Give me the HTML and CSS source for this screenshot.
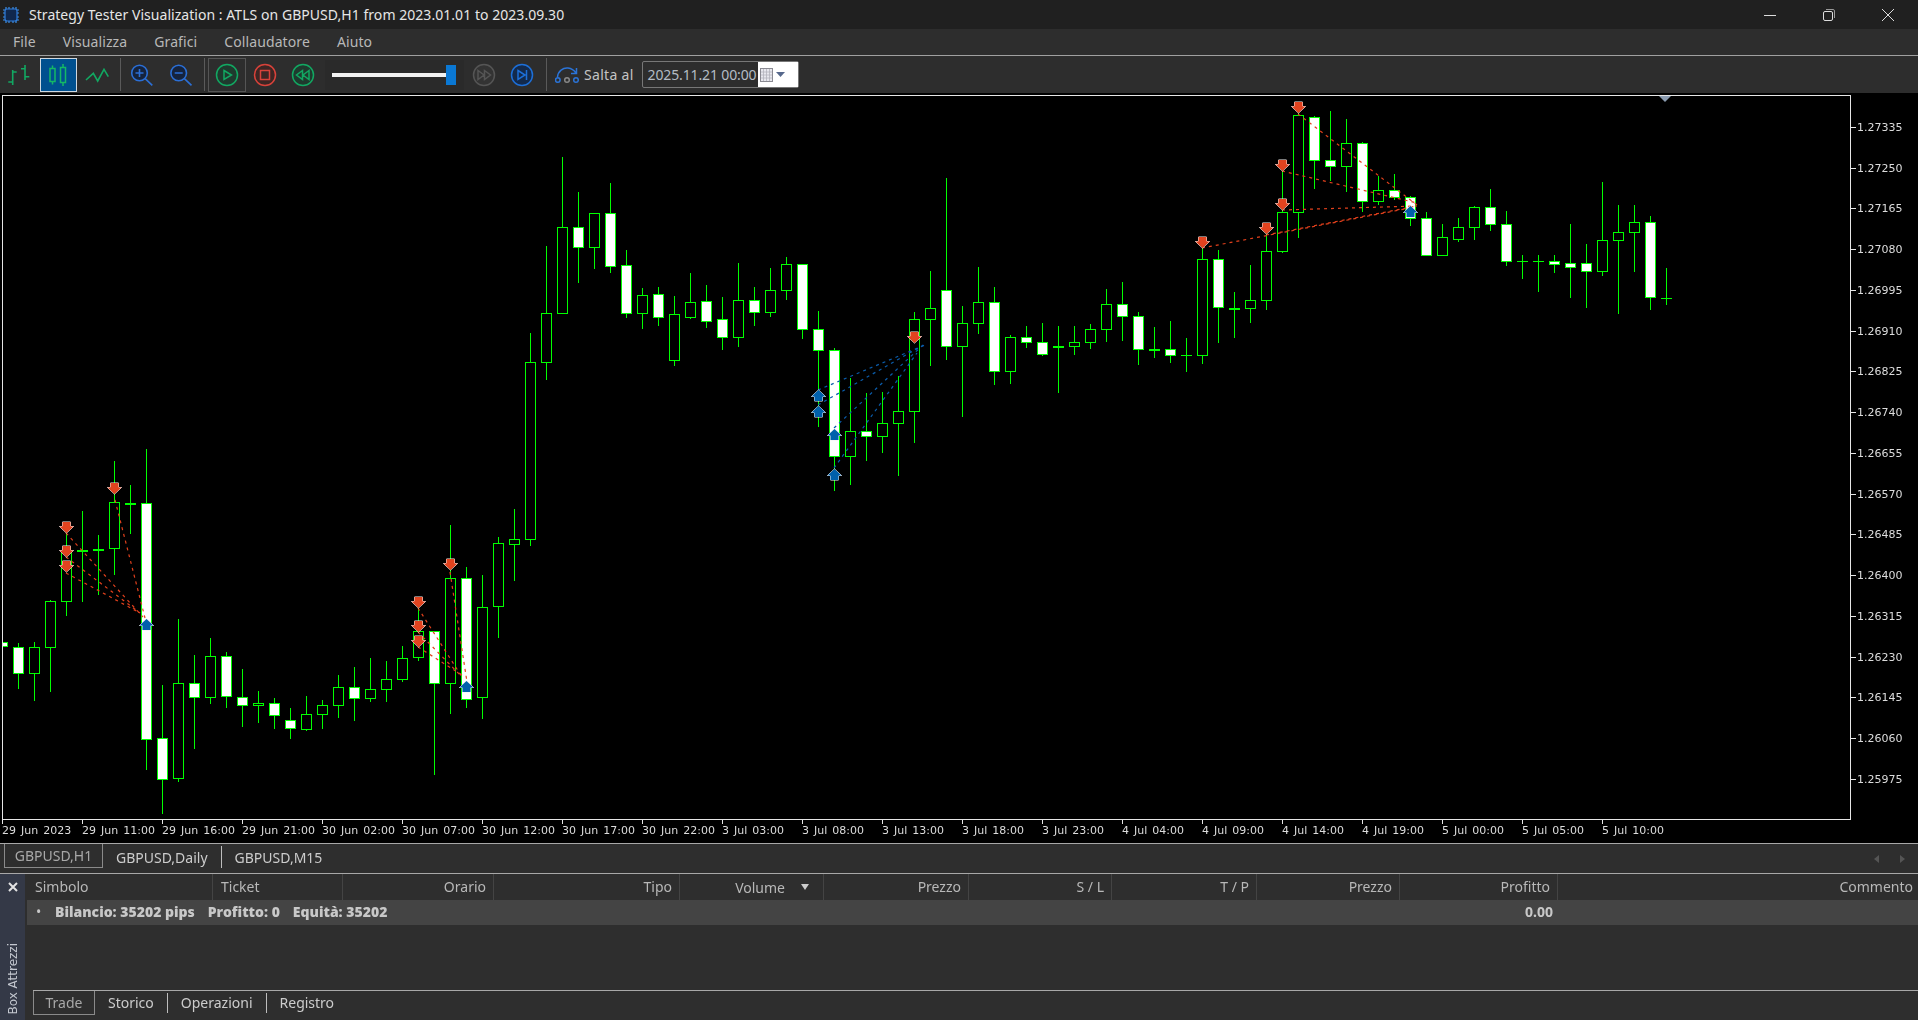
FILE: index.html
```html
<!DOCTYPE html>
<html lang="it">

<head>
  <meta charset="UTF-8" />
  <title>Strategy Tester Visualization</title>
  <link rel="stylesheet" href="styles.css">
</head>

<body>
  <div class="titlebar">
    <svg class="app-icon" width="18" height="18" viewBox="0 0 18 18">
      <path d="M4 1v16M7 1v16M11 1v16M14 1v16M1 4h16M1 7h16M1 11h16M1 14h16" stroke="#3d8fe8" stroke-width="1.2" />
      <rect x="3" y="3" width="12" height="12" rx="2" fill="#10284e" stroke="#2f7fe0" stroke-width="1.2" />
    </svg>
    <span class="title-text">Strategy Tester Visualization : ATLS on GBPUSD,H1 from 2023.01.01 to 2023.09.30</span>
    <div class="win-buttons">
      <svg width="14" height="14" viewBox="0 0 14 14"><path d="M1 7.5h12" stroke="#ddd" fill="none" /></svg>
      <svg width="14" height="14" viewBox="0 0 14 14"><rect x="1.5" y="3.5" width="9" height="9" rx="1.5" stroke="#ddd" fill="none" /><path d="M4 1.5h7a1.5 1.5 0 0 1 1.5 1.5v7" stroke="#999" fill="none" /></svg>
      <svg width="14" height="14" viewBox="0 0 14 14"><path d="M1 1l12 12M13 1L1 13" stroke="#ddd" fill="none" /></svg>
    </div>
  </div>

  <div class="menubar">
    <span>File</span>
    <span>Visualizza</span>
    <span>Grafici</span>
    <span>Collaudatore</span>
    <span>Aiuto</span>
  </div>

  <div class="toolbar">
    <div class="tool">
      <svg width="38" height="34" viewBox="0 0 38 34" fill="none" stroke="#12a862" stroke-width="1.6">
        <path d="M10.7 12v15M6.3 24h4.4M10.7 14h4M23 7v15M19 10.7h4M23 18.7h4.3" />
      </svg>
    </div>
    <div class="tool selected">
      <svg width="38" height="34" viewBox="0 0 38 34" fill="none" stroke="#14b866" stroke-width="1.5">
        <path d="M12.5 7.5v19M23 6v22" />
        <rect x="10" y="10.5" width="5" height="13" fill="#00508f" />
        <rect x="20.5" y="9.5" width="5" height="15" fill="#00508f" />
      </svg>
    </div>
    <div class="tool">
      <svg width="38" height="34" viewBox="0 0 38 34" fill="none" stroke="#12a862" stroke-width="1.6">
        <path d="M8 22l7.3-6.7L19.7 23 26 11.3l4.3 7.4" />
      </svg>
    </div>
    <div class="sep sep-first"></div>
    <div class="tool">
      <svg width="38" height="34" viewBox="0 0 38 34" fill="none" stroke="#2b6fd6" stroke-width="1.6">
        <circle cx="16.5" cy="15" r="7.8" fill="#15233d" />
        <path d="M22.2 20.7l7.1 6.6M12.5 15h8M16.5 11v8" />
      </svg>
    </div>
    <div class="tool">
      <svg width="38" height="34" viewBox="0 0 38 34" fill="none" stroke="#2b6fd6" stroke-width="1.6">
        <circle cx="17.7" cy="15" r="7.8" fill="#15233d" />
        <path d="M23.4 20.7l7.1 6.6M13.7 15h8" />
      </svg>
    </div>
    <div class="sep sep-play"></div>
    <div class="tool boxed">
      <svg width="38" height="34" viewBox="0 0 38 34" fill="none" stroke="#12a862" stroke-width="1.5">
        <circle cx="19" cy="17" r="10.5" fill="#1f3a2e" />
        <path d="M16 12.5l7.5 4.5-7.5 4.5z" />
      </svg>
    </div>
    <div class="tool">
      <svg width="38" height="34" viewBox="0 0 38 34" fill="none" stroke="#d8423a" stroke-width="1.5">
        <circle cx="19" cy="17" r="10.5" fill="#3d2624" />
        <rect x="14.5" y="12.5" width="9" height="9" />
      </svg>
    </div>
    <div class="tool">
      <svg width="38" height="34" viewBox="0 0 38 34" fill="none" stroke="#12a862" stroke-width="1.5">
        <circle cx="19" cy="17" r="10.5" fill="#1f3a2e" />
        <path d="M18.5 12.5l-6 4.5 6 4.5zM25 12.5l-6 4.5 6 4.5z" />
      </svg>
    </div>
    <div class="slider">
      <div class="slider-track"></div>
      <div class="slider-handle"></div>
    </div>
    <div class="tool">
      <svg width="38" height="34" viewBox="0 0 38 34" fill="none" stroke="#555" stroke-width="1.5">
        <circle cx="19" cy="17" r="10.5" fill="#333" />
        <path d="M13 12.5l6 4.5-6 4.5zM19.5 12.5l6 4.5-6 4.5z" />
      </svg>
    </div>
    <div class="tool">
      <svg width="38" height="34" viewBox="0 0 38 34" fill="none" stroke="#1d6fd8" stroke-width="1.5">
        <circle cx="19" cy="17" r="10.5" fill="#132a4c" />
        <path d="M15 12.5l7 4.5-7 4.5zM23.5 12v10" />
      </svg>
    </div>
    <div class="sep sep-jump"></div>
    <svg class="jump-icon" width="24" height="18" viewBox="0 0 24 18" fill="none" stroke="#2b74d8" stroke-width="1.5">
      <path d="M2.5 11C3 5 8 1.5 13 2c3.5 .4 6 2 8 5M21.5 2v5.5H16" />
      <circle cx="2.8" cy="14" r="2.3" />
      <circle cx="12" cy="14" r="2.3" stroke="#888" />
      <circle cx="21" cy="14" r="2.3" />
    </svg>
    <span class="jump-label">Salta al</span>
    <div class="date-input">
      <span class="date-value">2025.11.21 00:00</span>
      <div class="date-button">
        <svg width="30" height="18" viewBox="0 0 30 18">
          <rect x="2.5" y="2.5" width="12" height="13" fill="#e8e8ee" stroke="#8a8a92" />
          <path d="M5.5 3v12M8.5 3v12M11.5 3v12M3 6h11M3 9h11M3 12h11" stroke="#b4b4bc" stroke-width=".8" />
          <path d="M18 6h9l-4.5 5z" fill="#56688c" />
        </svg>
      </div>
    </div>
  </div>

  <div class="chart">
    <div class="chart-main">
      <div class="plot">
        <canvas id="candles" width="1847" height="723"></canvas>
      </div>
      <div class="price-axis">
        <span>1.27335</span><span>1.27250</span><span>1.27165</span><span>1.27080</span>
        <span>1.26995</span><span>1.26910</span><span>1.26825</span><span>1.26740</span>
        <span>1.26655</span><span>1.26570</span><span>1.26485</span><span>1.26400</span>
        <span>1.26315</span><span>1.26230</span><span>1.26145</span><span>1.26060</span>
        <span>1.25975</span>
      </div>
    </div>
    <div class="time-axis">
      <span>29 Jun 2023</span><span>29 Jun 11:00</span><span>29 Jun 16:00</span><span>29 Jun 21:00</span>
      <span>30 Jun 02:00</span><span>30 Jun 07:00</span><span>30 Jun 12:00</span><span>30 Jun 17:00</span>
      <span>30 Jun 22:00</span><span>3 Jul 03:00</span><span>3 Jul 08:00</span><span>3 Jul 13:00</span>
      <span>3 Jul 18:00</span><span>3 Jul 23:00</span><span>4 Jul 04:00</span><span>4 Jul 09:00</span>
      <span>4 Jul 14:00</span><span>4 Jul 19:00</span><span>5 Jul 00:00</span><span>5 Jul 05:00</span>
      <span>5 Jul 10:00</span>
    </div>
  </div>

  <div class="chart-tabs">
    <span class="tab active">GBPUSD,H1</span>
    <span class="tab divided">GBPUSD,Daily</span>
    <span class="tab">GBPUSD,M15</span>
    <div class="tab-arrows">
      <svg width="8" height="10" viewBox="0 0 8 10"><path d="M6 1v8L1 5z" fill="#555" /></svg>
      <svg width="8" height="10" viewBox="0 0 8 10"><path d="M2 1v8l5-4z" fill="#555" /></svg>
    </div>
  </div>

  <div class="toolbox">
    <div class="toolbox-side">
      <svg width="12" height="12" viewBox="0 0 12 12"><path d="M2 2l8 8M10 2l-8 8" stroke="#e4e4e4" stroke-width="2" /></svg>
      <span class="toolbox-name">Box Attrezzi</span>
    </div>
    <div class="toolbox-main">
      <div class="cols head">
        <div>Simbolo</div>
        <div>Ticket</div>
        <div class="right">Orario</div>
        <div class="right">Tipo</div>
        <div class="volume">Volume <svg width="8" height="6" viewBox="0 0 8 6"><path d="M0 0h8L4 6z" fill="#ccc" /></svg></div>
        <div class="right">Prezzo</div>
        <div class="right">S / L</div>
        <div class="right">T / P</div>
        <div class="right">Prezzo</div>
        <div class="right">Profitto</div>
        <div class="right last">Commento</div>
      </div>
      <div class="cols balance">
        <div class="balance-text"><span class="dot">•</span><b>Bilancio: 35202 pips</b><b>Profitto: 0</b><b>Equità: 35202</b></div>
        <div class="balance-profit">0.00</div>
      </div>
      <div class="bottom-tabs">
        <span class="btab active">Trade</span>
        <span class="btab divided">Storico</span>
        <span class="btab divided">Operazioni</span>
        <span class="btab">Registro</span>
      </div>
    </div>
  </div>

  <script src="chart.js"></script>
</body>

</html>
```

FILE: styles.css
```css
* {
  box-sizing: border-box;
}

html,
body {
  margin: 0;
  height: 1020px;
  overflow: hidden;
}

body {
  display: flex;
  flex-direction: column;
  background: #2e2e2e;
  font-family: "Noto Sans", sans-serif;
  font-size: 14px;
  color: #b8b8b8;
}

.titlebar {
  height: 29px;
  flex: none;
  display: flex;
  align-items: center;
  padding-left: 2px;
  background: #202020;
  color: #e6e6e6;
}

.app-icon {
  margin-right: 9px;
}

.title-text {
  font-size: 14px;
  letter-spacing: 0.045px;
}

.win-buttons {
  margin-left: auto;
  margin-right: 23px;
  display: flex;
  gap: 45px;
}

.menubar {
  height: 26px;
  flex: none;
  display: flex;
  align-items: center;
  padding: 0 0 2px 13px;
  gap: 27px;
  letter-spacing: 0.1px;
  background: #2d2d2d;
}

.toolbar {
  height: 38px;
  flex: none;
  display: flex;
  align-items: center;
  padding-left: 2px;
  border-top: 1px solid #a0a0a0;
  background: #2d2d2d;
}

.tool {
  width: 38px;
  height: 34px;
  flex: none;
}

.tool svg {
  display: block;
}

.tool.selected {
  background: #00508f;
  border: 1px solid #cfd8e0;
  width: 37px;
  margin-right: 1px;
}

.tool.selected svg {
  margin: -1px;
}

.tool.boxed {
  border: 1px solid #555;
}

.tool.boxed svg {
  margin: -1px;
}

.sep {
  width: 1px;
  height: 33px;
  background: #5a5a5a;
  flex: none;
}

.sep-first {
  margin: 0 2px 0 4px;
}

.sep-play {
  margin: 0 3px 0 5px;
}

.sep-jump {
  margin: 0 8px 0 5px;
}

.slider {
  width: 139px;
  height: 30px;
  margin: 0 1px 0 3px;
  padding-left: 7px;
  display: flex;
  align-items: center;
  background: #2a2a2a;
  flex: none;
}

.slider-track {
  width: 114px;
  height: 4px;
  background: #f2f2f2;
}

.slider-handle {
  width: 10px;
  height: 20px;
  background: #0a78d4;
}

.jump-icon {
  flex: none;
}

.jump-label {
  margin-left: 5px;
  color: #c4c4c4;
  letter-spacing: 0.3px;
}

.date-input {
  margin-left: 8px;
  width: 157px;
  height: 27px;
  display: flex;
  border: 1px solid #777;
  border-radius: 2px;
  color: #b4bcc4;
}

.date-value {
  width: 115px;
  padding-left: 5px;
  line-height: 25px;
  white-space: nowrap;
  letter-spacing: -0.13px;
}

.date-button {
  flex: 1;
  display: flex;
  align-items: center;
  background: #fff;
}

.chart {
  height: 750px;
  flex: none;
  padding: 2px 0 0 2px;
  background: #000;
  color: #dcdcdc;
  font-family: "DejaVu Sans", sans-serif;
  font-size: 11px;
}

.chart-main {
  display: flex;
  height: 725px;
}

.plot {
  width: 1849px;
  height: 725px;
  flex: none;
  border: 1px solid #e6e6e6;
}

#candles {
  display: block;
}

.price-axis {
  display: flex;
  flex-direction: column;
  padding-top: 12px;
}

.price-axis span {
  height: 40.75px;
  display: flex;
  align-items: center;
  gap: 1px;
}

.price-axis span::before {
  content: "";
  width: 5px;
  height: 1px;
  background: #e6e6e6;
}

.time-axis {
  display: flex;
  word-spacing: 1.5px;
  line-height: 14px;
}

.time-axis span {
  width: 80px;
  flex: none;
  white-space: nowrap;
}

.time-axis span::before {
  content: "";
  display: block;
  width: 1px;
  height: 4px;
  background: #e6e6e6;
}

.chart-tabs {
  height: 30px;
  flex: none;
  display: flex;
  padding-left: 4px;
  border-top: 1px solid #a8a8a8;
  color: #cccccc;
}

.tab {
  height: 22px;
  padding: 0 13px;
  line-height: 24px;
  margin-top: 2px;
}

.tab.active {
  height: 24px;
  width: 99px;
  margin-top: 0;
  padding: 0;
  text-align: center;
  border: 1px solid #8a8a8a;
  border-top: 0;
  color: #a8a8a8;
}

.tab.divided {
  border-right: 1px solid #bdbdbd;
}

.tab-arrows {
  margin-left: auto;
  margin-right: 12px;
  display: flex;
  align-items: center;
  gap: 17px;
}

.toolbox {
  flex: 1;
  display: flex;
  border-top: 1px solid #a8a8a8;
}

.toolbox-side {
  width: 25px;
  flex: none;
  display: flex;
  flex-direction: column;
  justify-content: space-between;
  align-items: center;
  padding: 7px 0 5px;
  background: #343947;
}

.toolbox-name {
  writing-mode: vertical-rl;
  transform: rotate(180deg);
  font-family: "DejaVu Sans", sans-serif;
  font-size: 12px;
  color: #c4c8d0;
}

.toolbox-main {
  flex: 1;
  display: flex;
  flex-direction: column;
  padding-left: 2px;
}

.cols {
  display: grid;
  grid-template-columns: 186px 130px 151px 186px 144px 145px 143px 145px 143px 158px 1fr;
}

.head {
  height: 26px;
  line-height: 25px;
}

.head > div {
  padding: 0 7px 0 8px;
  border-right: 1px solid #444;
}

.head .last {
  border-right: 0;
  padding-right: 5px;
}

.right {
  text-align: right;
}

.head .volume {
  display: flex;
  align-items: center;
  justify-content: flex-end;
  gap: 16px;
  padding-right: 14px;
}

.balance {
  height: 25px;
  line-height: 24px;
  background: #444;
  font-weight: 700;
  color: #c8c8c8;
}

.balance-text {
  grid-column: 1 / 10;
  display: flex;
  gap: 13px;
}

.dot {
  width: 6px;
  margin-left: 9px;
  font-weight: 400;
}

.balance-profit {
  grid-column: 10;
  text-align: right;
  padding-right: 5px;
}

.bottom-tabs {
  margin-top: auto;
  margin-left: 6px;
  height: 30px;
  display: flex;
  border-top: 1px solid #a8a8a8;
  color: #cccccc;
}

.btab {
  height: 20px;
  margin-top: 2px;
  padding: 0 13px;
  line-height: 20px;
}

.btab.active {
  height: 24px;
  width: 62px;
  margin-top: 0;
  padding: 0;
  line-height: 24px;
  text-align: center;
  border: 1px solid #8a8a8a;
  border-top: 0;
  color: #a8a8a8;
}

.btab.divided {
  border-right: 1px solid #bdbdbd;
}
```

FILE: chart.js
```js
const canvas = document.getElementById("candles");
const ctx = canvas.getContext("2d");

const GREEN = "#00ff00";
const FIRST_X = 18;
const STEP = 16;

// high, body top, body bottom, low, white body (page pixels), one row per bar
const bars = [
  [643, 647, 673, 688, 1], [642, 647, 673, 700, 0], [600, 601, 647, 691, 0], [528, 551, 601, 615, 0],
  [511, 550, 551, 601, 2], [535, 549, 550, 594, 2], [461, 502, 548, 574, 0], [485, 503, 504, 533, 2],
  [449, 503, 739, 769, 1], [685, 738, 779, 813, 1], [619, 683, 778, 781, 0], [655, 683, 697, 748, 1],
  [638, 656, 697, 703, 0], [652, 656, 696, 707, 1], [669, 697, 705, 726, 1], [691, 703, 705, 722, 0],
  [698, 703, 715, 728, 1], [708, 720, 728, 738, 1], [696, 714, 729, 730, 0], [700, 705, 714, 728, 0],
  [675, 687, 705, 717, 0], [667, 687, 698, 720, 1], [658, 689, 698, 701, 0], [661, 679, 689, 701, 0],
  [646, 658, 679, 681, 0], [607, 631, 657, 660, 0], [631, 631, 683, 774, 1], [525, 578, 683, 713, 0],
  [567, 578, 699, 707, 1], [575, 607, 697, 718, 0], [537, 543, 606, 637, 0], [509, 539, 544, 580, 0],
  [333, 362, 539, 545, 0], [246, 313, 362, 379, 0], [157, 227, 313, 313, 0], [192, 227, 247, 282, 1],
  [213, 213, 247, 268, 0], [183, 213, 266, 272, 1], [250, 265, 313, 317, 1], [288, 295, 313, 328, 0],
  [287, 294, 317, 325, 1], [296, 314, 360, 365, 0], [273, 302, 317, 318, 0], [285, 301, 321, 327, 1],
  [297, 319, 337, 349, 1], [263, 300, 337, 346, 0], [287, 300, 312, 325, 1], [268, 290, 312, 316, 0],
  [257, 264, 290, 299, 0], [264, 264, 329, 338, 1], [311, 329, 350, 426, 1], [348, 350, 456, 490, 1],
  [378, 431, 456, 484, 0], [393, 431, 436, 460, 1], [392, 423, 436, 452, 0], [376, 411, 423, 475, 0],
  [312, 319, 411, 442, 0], [271, 308, 319, 365, 0], [178, 290, 346, 359, 1], [306, 323, 346, 416, 0],
  [267, 302, 323, 333, 0], [287, 302, 371, 384, 1], [335, 337, 371, 383, 0], [326, 337, 342, 347, 1],
  [323, 342, 354, 355, 1], [326, 346, 347, 392, 2], [326, 342, 346, 354, 0], [324, 329, 342, 348, 0],
  [289, 304, 329, 341, 0], [282, 304, 316, 340, 1], [312, 316, 349, 364, 1], [327, 349, 350, 357, 2],
  [321, 349, 355, 362, 1], [338, 355, 355, 371, 3], [247, 259, 355, 363, 0], [250, 259, 307, 342, 1],
  [292, 308, 309, 337, 2], [265, 300, 308, 322, 0], [233, 251, 300, 309, 0], [170, 212, 251, 252, 0],
  [113, 115, 212, 237, 0], [116, 117, 160, 188, 1], [111, 160, 166, 180, 1], [119, 143, 166, 191, 0],
  [142, 143, 201, 211, 1], [176, 190, 201, 204, 0], [174, 190, 197, 199, 1], [196, 197, 218, 225, 1],
  [212, 218, 255, 255, 1], [224, 237, 255, 255, 0], [218, 227, 239, 241, 0], [206, 207, 227, 239, 0],
  [189, 207, 224, 230, 1], [211, 224, 261, 265, 1], [255, 261, 261, 278, 3], [255, 261, 261, 291, 3],
  [255, 261, 264, 272, 1], [224, 263, 267, 297, 1], [244, 263, 271, 307, 1], [182, 240, 271, 275, 0],
  [205, 232, 240, 313, 0], [205, 222, 232, 271, 0], [216, 222, 297, 309, 1], [268, 298, 298, 304, 3]
];

const redLines = [
  [66, 533, 143, 617], [66, 557, 140, 613], [66, 573, 140, 613], [115, 500, 145, 618],
  [418, 608, 462, 677], [418, 632, 462, 677], [418, 647, 462, 675], [450, 572, 467, 682],
  [1298, 114, 1417, 205], [1282, 171, 1417, 203], [1282, 210, 1417, 206],
  [1266, 235, 1417, 206], [1202, 248, 1410, 208]
];

const blueLines = [
  [818, 390, 925, 345], [818, 405, 920, 347], [834, 428, 923, 345], [834, 468, 917, 353]
];

const sells = [
  [66, 527], [66, 551], [66, 566], [114, 488], [450, 564], [418, 602], [418, 626], [418, 641],
  [914, 337], [1298, 107], [1282, 165], [1282, 204], [1266, 228], [1202, 242]
];

const buys = [
  [146, 625], [466, 687], [818, 396], [818, 412], [834, 435], [834, 475], [1410, 212]
];

function drawBar(x, bar) {
  const [high, top, bottom, low, kind] = bar;
  ctx.fillStyle = GREEN;
  ctx.fillRect(x, high, 1, low - high + 1);
  // kind 2 and 3 are dojis, thick and thin
  if (kind >= 2) {
    ctx.fillRect(x - 5, top, 11, kind === 2 ? 2 : 1);
    return;
  }
  ctx.fillRect(x - 5, top, 11, bottom - top + 1);
  ctx.fillStyle = kind === 1 ? "#fff" : "#000";
  ctx.fillRect(x - 4, top + 1, 9, bottom - top - 1);
}

function drawLines(lines, color) {
  ctx.strokeStyle = color;
  ctx.lineWidth = 1.2;
  ctx.setLineDash([3, 4]);
  lines.forEach(([x1, y1, x2, y2]) => {
    ctx.beginPath();
    ctx.moveTo(x1, y1);
    ctx.lineTo(x2, y2);
    ctx.stroke();
  });
  ctx.setLineDash([]);
}

function drawArrow(x, y, dir, color) {
  const c = x + 0.5;
  const p = [[-4, -5], [4, -5], [4, -0.5], [7, -0.5], [0, 6], [-7, -0.5], [-4, -0.5]];
  ctx.beginPath();
  p.forEach(([dx, dy], i) => {
    if (i === 0) ctx.moveTo(c + dx, y + dy * dir);
    else ctx.lineTo(c + dx, y + dy * dir);
  });
  ctx.closePath();
  ctx.fillStyle = color;
  ctx.strokeStyle = "#f4f4f4";
  ctx.lineWidth = 1;
  ctx.stroke();
  ctx.fill();
}

// canvas starts just inside the plot border, keep page coordinates below
ctx.translate(-3, -96);

drawBar(2, [642, 642, 646, 646, 1]);
bars.forEach((bar, i) => drawBar(FIRST_X + i * STEP, bar));

drawLines(redLines, "#e2401c");
drawLines(blueLines, "#0a5cab");

sells.forEach(([x, y]) => drawArrow(x, y, 1, "#e2431f"));
buys.forEach(([x, y]) => drawArrow(x, y, -1, "#0060ac"));

// little shift marker at the top of the plot
ctx.fillStyle = "#8a9bb0";
ctx.beginPath();
ctx.moveTo(1659, 96);
ctx.lineTo(1671, 96);
ctx.lineTo(1665, 102);
ctx.closePath();
ctx.fill();
```
